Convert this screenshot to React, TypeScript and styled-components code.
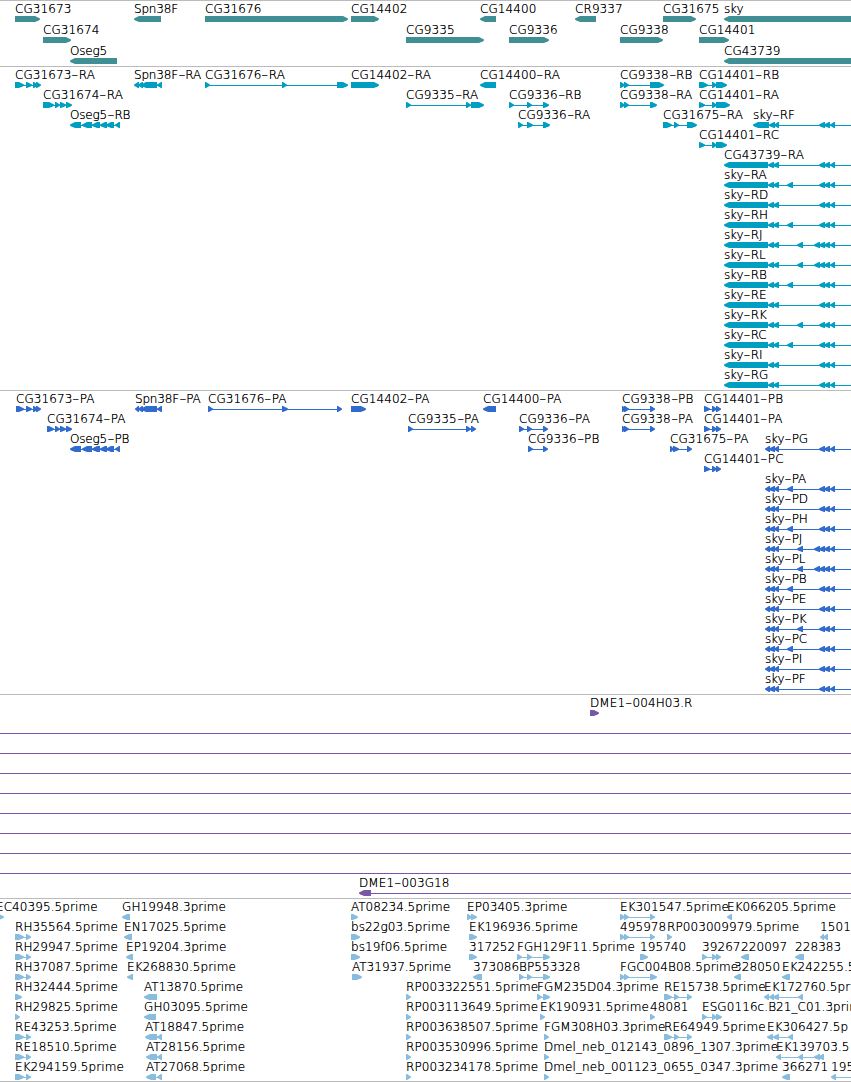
import React from "react";
import styled, { createGlobalStyle } from "styled-components";

const GlobalStyle = createGlobalStyle`
  body {
    margin: 0;
    background: #fff;
    color: #000;
    font-family: "DejaVu Sans", Verdana, sans-serif;
    font-size: 12px;
    overflow: hidden;
  }
`;

const VIEW_WIDTH = 851;

const Browser = styled.main`
  display: flex;
  flex-direction: column;
  width: ${VIEW_WIDTH}px;
  height: 1082px;
  overflow: hidden;
`;

const TrackPanel = styled.section<{ $bottom: number; $last?: boolean }>`
  display: flex;
  flex-direction: column;
  flex: none;
  border-top: 1px solid #bbb;
  border-bottom: ${(p) => (p.$last ? "1px solid #bbb" : "0")};
  padding-bottom: ${(p) => p.$bottom}px;
`;

const LaneRow = styled.div<{ $height: number }>`
  position: relative;
  flex: none;
  height: ${(p) => p.$height}px;
`;

const Label = styled.span<{ $x: number; $spacing: number }>`
  position: absolute;
  top: 1px;
  left: ${(p) => p.$x}px;
  line-height: 14px;
  white-space: nowrap;
  font-weight: 200;
  letter-spacing: ${(p) => p.$spacing}px;
  text-shadow: 0 0 0 #000;
`;

const Dash = styled.span`
  display: inline-block;
  width: 7.4px;
  text-align: center;
  transform: scaleX(1.7);
`;

const Glyphs = styled.svg`
  position: absolute;
  top: 15px;
  left: 0;
  display: block;
`;

type Span = [number, number];
interface Feature {
  name?: string;
  x: number;
  exons: Span[];
  left?: boolean;
  to?: number;
}

const fwd = (name: string, ...exons: Span[]): Feature => ({ name, x: exons[0][0], exons });
const rev = (name: string, ...exons: Span[]): Feature => ({ name, x: exons[0][0], exons, left: true });
const open = (f: Feature): Feature => ({ ...f, to: VIEW_WIDTH });

const genes: Feature[][] = [
  [
    fwd("CG31673", [15, 40]), rev("Spn38F", [134, 161]), fwd("CG31676", [205, 348]),
    fwd("CG14402", [351, 379]), rev("CG14400", [480, 496]), rev("CR9337", [575, 596]),
    fwd("CG31675", [663, 696]), rev("sky", [724, 860]),
  ],
  [
    fwd("CG31674", [43, 71]), fwd("CG9335", [406, 484]), fwd("CG9336", [509, 549]),
    fwd("CG9338", [620, 663]), fwd("CG14401", [699, 729]),
  ],
  [rev("Oseg5", [70, 117]), rev("CG43739", [724, 860])],
];

const serpin: Span[] = [[134, 139], [138, 143], [141, 157], [157, 162]];
const oseg: Span[] = [[70, 81], [82, 92], [92, 100], [100, 107], [106, 114], [115, 120]];
const skyTail: Span[] = [[819, 825], [824, 830], [830, 835]];

const extras: Record<string, Span[]> = {
  A: [[787, 793]], H: [[787, 793]], B: [[787, 793]], C: [[787, 793]],
  K: [[797, 803]],
  J: [[797, 803], [814, 820]], L: [[797, 803], [814, 820]],
};

const skyRna = (name: string, key = ""): Feature[] => [
  open(rev(name, [724, 768], [768, 774], [773, 779], ...(extras[key] || []), ...skyTail)),
];
const skyProtein = (key: string): Feature =>
  open(rev("sky-P" + key, [765, 770], [769, 775], [774, 779], ...(extras[key] || []), ...skyTail));

const transcripts: Feature[][] = [
  [
    fwd("CG31673-RA", [15, 24], [26, 32], [33, 38], [36, 41]),
    rev("Spn38F-RA", ...serpin),
    fwd("CG31676-RA", [205, 210], [282, 287], [337, 348]),
    fwd("CG14402-RA", [351, 379]), rev("CG14400-RA", [480, 496]),
    fwd("CG9338-RB", [620, 625], [624, 629], [650, 664]),
    fwd("CG14401-RB", [699, 708], [712, 717], [716, 727]),
  ],
  [
    fwd("CG31674-RA", [43, 54], [55, 60], [60, 66], [66, 72]),
    fwd("CG9335-RA", [406, 411], [466, 471], [471, 484]),
    fwd("CG9336-RB", [509, 514], [527, 532], [543, 549]),
    fwd("CG9338-RA", [620, 625], [624, 629], [650, 657]),
    fwd("CG14401-RA", [699, 705], [712, 717], [716, 730]),
  ],
  [
    rev("Oseg5-RB", ...oseg),
    fwd("CG9336-RA", [518, 523], [527, 533], [543, 550]),
    fwd("CG31675-RA", [663, 672], [674, 679], [687, 697]),
    open(rev("sky-RF", [753, 769], [769, 775], [774, 779], ...skyTail)),
  ],
  [fwd("CG14401-RC", [699, 705], [712, 717], [716, 727])],
  skyRna("CG43739-RA"),
  ...["A", "D", "H", "J", "L", "B", "E", "K", "C", "I", "G"].map((k) => skyRna("sky-R" + k, k)),
];

const proteins: Feature[][] = [
  [
    fwd("CG31673-PA", [16, 24], [26, 32], [33, 38], [36, 41]),
    rev("Spn38F-PA", [135, 139], ...serpin.slice(1)),
    fwd("CG31676-PA", [208, 213], [282, 288], [337, 342]),
    fwd("CG14402-PA", [351, 366]), rev("CG14400-PA", [483, 496]),
    fwd("CG9338-PB", [622, 626], [624, 629], [650, 655]),
    fwd("CG14401-PB", [704, 710], [712, 717], [716, 721]),
  ],
  [
    fwd("CG31674-PA", [47, 54], [55, 60], [60, 66], [66, 72]),
    fwd("CG9335-PA", [408, 413], [466, 471], [471, 476]),
    fwd("CG9336-PA", [519, 524], [527, 532], [543, 548]),
    fwd("CG9338-PA", [622, 626], [624, 629], [650, 655]),
    fwd("CG14401-PA", [704, 710], [712, 717], [716, 721]),
  ],
  [
    rev("Oseg5-PB", ...oseg),
    fwd("CG9336-PB", [528, 533], [543, 548]),
    fwd("CG31675-PA", [670, 674], [673, 679], [687, 692]),
    skyProtein("G"),
  ],
  [fwd("CG14401-PC", [704, 710], [712, 717], [716, 721])],
  ...["A", "D", "H", "J", "L", "B", "E", "K", "C", "I", "F"].map((k) => [skyProtein(k)]),
];

const spanning: Feature = { x: -1, exons: [], to: VIEW_WIDTH };
const bacs: Feature[][] = [
  [fwd("DME1-004H03.R", [590, 599])],
  ...Array.from({ length: 8 }, () => [spanning]),
  [open(rev("DME1-003G18", [359, 371]))],
];

const rh: Span[] = [[15, 24], [26, 31]];
const long38: Span[] = [[620, 625], [624, 629], [650, 655]];
const re75: Span[] = [[664, 672], [674, 679], [687, 692]];

const ests: Feature[][] = [
  [
    fwd("EC40395.5prime", [-4, 4]), rev("GH19948.3prime", [122, 130]),
    fwd("AT08234.5prime", [351, 358]), fwd("EP03405.3prime", [467, 472], [471, 477]),
    fwd("EK301547.5prime", ...long38), rev("EK066205.5prime", [727, 732]),
  ],
  [
    fwd("RH35564.5prime", ...rh), rev("EN17025.5prime", [124, 132]),
    fwd("bs22g03.5prime", [351, 360]), fwd("EK196936.5prime", [469, 477]),
    fwd("495978", ...long38), fwd("RP003009979.5prime", [667, 672]),
    rev("1501", [820, 824], [823, 828]),
  ],
  [
    fwd("RH29947.5prime", ...rh), rev("EP19204.3prime", [126, 133]),
    fwd("bs19f06.5prime", [351, 360]), fwd("317252", [469, 477]),
    fwd("FGH129F11.5prime", [517, 522], [527, 532], [543, 550]),
    fwd("195740", [640, 648]), fwd("39267", [702, 707], [712, 717], [716, 721]),
    rev("220097", [741, 749]), rev("228383", [795, 804]),
  ],
  [
    fwd("RH37087.5prime", ...rh), rev("EK268830.5prime", [127, 133]),
    fwd("AT31937.5prime", [352, 362]), rev("373086", [473, 482]),
    fwd("BP553328", [519, 524], [527, 532], [543, 550]),
    fwd("FGC004B08.5prime", [620, 625], [624, 629], [650, 657]),
    rev("328050", [734, 741]), rev("EK242255.5p", [782, 790]),
  ],
  [
    fwd("RH32444.5prime", [15, 22]), rev("AT13870.5prime", [144, 157]),
    fwd("RP003322551.5prime", [406, 411]), fwd("FGM235D04.3prime", [537, 542], [543, 550]),
    fwd("RE15738.5prime", ...re75),
    rev("EK172760.5pr", [764, 769], [769, 774], [773, 779], [798, 803]),
  ],
  [
    fwd("RH29825.5prime", [15, 20]), rev("GH03095.5prime", [144, 156]),
    fwd("RP003113649.5prime", [406, 411]), fwd("EK190931.5prime", [540, 545]),
    fwd("48081", [650, 655]), fwd("ESG0116c.B21_C01.3prim", [702, 707], [712, 717], [716, 722]),
  ],
  [
    fwd("RE43253.5prime", ...rh), rev("AT18847.5prime", [145, 157], [157, 162]),
    fwd("RP003638507.5prime", [406, 411]), fwd("FGM308H03.3prime", [544, 549]),
    fwd("RE64949.5prime", ...re75), rev("EK306427.5p", [767, 773], [773, 779], [788, 793]),
  ],
  [
    fwd("RE18510.5prime", ...rh), rev("AT28156.5prime", [146, 157], [157, 162]),
    fwd("RP003530996.5prime", [406, 411]), fwd("Dmel_neb_012143_0896_1307.3prime", [544, 549]),
    rev("EK139703.5", [776, 781], [798, 803], [814, 820], [818, 824]),
  ],
  [
    fwd("EK294159.5prime", ...rh), rev("AT27068.5prime", [146, 156], [157, 162]),
    fwd("RP003234178.5prime", [406, 411]), fwd("Dmel_neb_001123_0655_0347.3prime", [544, 549]),
    rev("366271", [782, 790]), open(rev("195", [831, 836])),
  ],
];

function arrowPoints([a, b]: Span, left?: boolean) {
  const tip = Math.min(6, b - a);
  const [tail, point, dir] = left ? [b, a, 1] : [a, b, -1];
  const at = (n: number) => point + dir * n;
  return [
    `${tail},0`, `${at(tip - 1)},0`, `${at(1)},2`, `${point},2.6`,
    `${point},3.6`, `${at(1)},4.2`, `${at(tip - 1)},6`, `${tail},6`,
  ].join(" ");
}

function FeatureGlyph({ feature, color }: { feature: Feature; color: string }) {
  const last = feature.exons[feature.exons.length - 1];
  const end = feature.to ?? last[1] - 1;
  return (
    <g fill={color}>
      {(feature.to || feature.exons.length > 1) && (
        <rect x={feature.x + 1} y={3} width={end - feature.x - 1} height={1} shapeRendering="crispEdges" />
      )}
      {feature.exons.map((e, i) => (
        <polygon key={i} points={arrowPoints(e, feature.left)} />
      ))}
    </g>
  );
}

function labelSpacing(name: string) {
  if (/^(sky|Spn|Oseg)/.test(name)) return -0.18;
  if (/^AT/.test(name)) return 0;
  return 0.08;
}

function FeatureLabel({ name, x }: { name: string; x: number }) {
  const parts = name.split("-");
  return (
    <Label $x={x} $spacing={labelSpacing(name)}>
      {parts[0]}
      {parts.length > 1 && <Dash>-</Dash>}
      {parts[1]}
    </Label>
  );
}

interface TrackProps {
  lanes: Feature[][];
  color: string;
  pitch?: number;
  bottom?: number;
  last?: boolean;
}

function Track({ lanes, color, pitch = 20, bottom = 3, last }: TrackProps) {
  return (
    <TrackPanel $bottom={bottom} $last={last}>
      {lanes.map((features, i) => (
        <LaneRow key={i} $height={pitch}>
          <Glyphs width={VIEW_WIDTH} height={6} viewBox={`0 0 ${VIEW_WIDTH} 6`}>
            {features.map((f, j) => (
              <FeatureGlyph key={j} feature={f} color={color} />
            ))}
          </Glyphs>
          {features.map((f, j) => f.name && <FeatureLabel key={j} name={f.name} x={f.x} />)}
        </LaneRow>
      ))}
    </TrackPanel>
  );
}

export default function App() {
  return (
    <>
      <GlobalStyle />
      <Browser>
        <Track lanes={genes} color="#3f8f94" pitch={21} bottom={2} />
        <Track lanes={transcripts} color="#009fc1" />
        <Track lanes={proteins} color="#306bcd" />
        <Track lanes={bacs} color="#7658a6" />
        <Track lanes={ests} color="#89bddf" bottom={2} last />
      </Browser>
    </>
  );
}
